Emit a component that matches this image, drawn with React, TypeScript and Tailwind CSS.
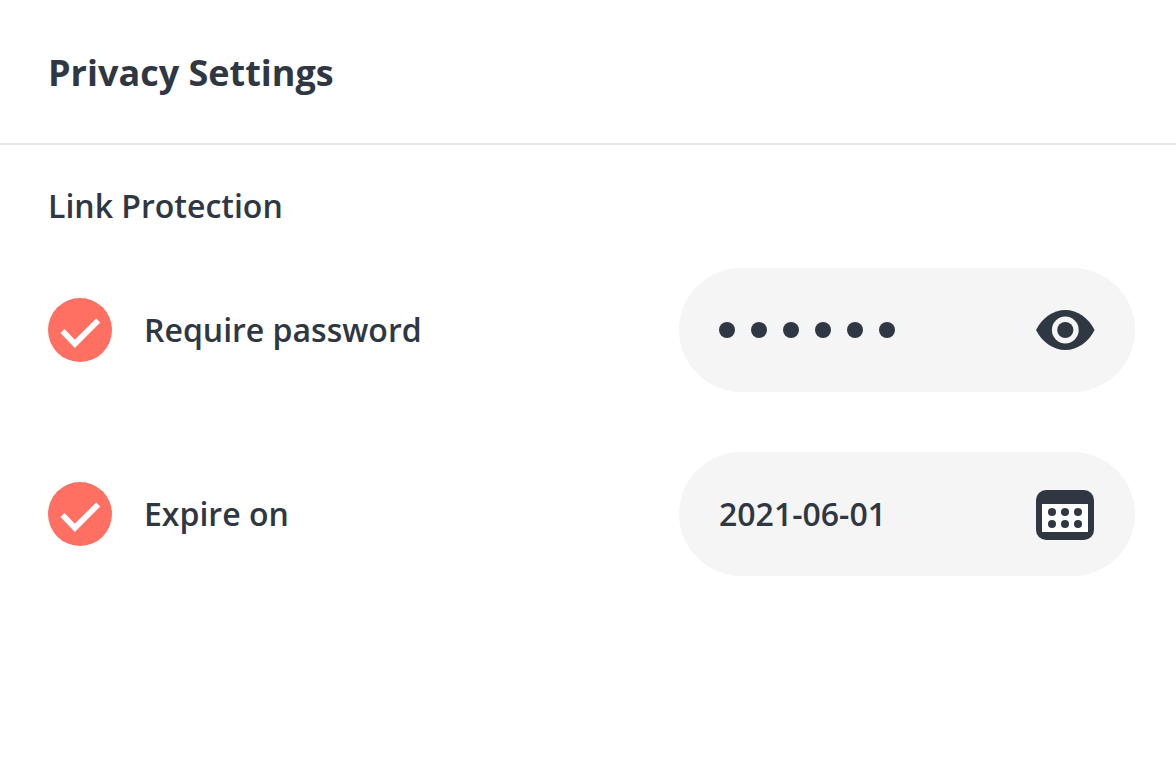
import { useId, useState } from 'react';
import type { ReactNode } from 'react';

function EyeIcon() {
    return (
        <svg viewBox="0 0 60 50" className="h-[50px] w-[60px]" fill="none" aria-hidden="true">
            <path d="M0 25C6 13 17 5 29.3 5S52.6 13 58.6 25C52.6 37 41.6 45 29.3 45S6 37 0 25Z" fill="#2f3742" />
            <circle cx="29.3" cy="25" r="13.4" fill="#f5f5f5" />
            <circle cx="29.3" cy="25" r="8.1" fill="#2f3742" />
        </svg>
    );
}

function CalendarIcon() {
    return (
        <svg viewBox="0 0 60 52" className="h-[52px] w-[60px]" fill="#2f3742" aria-hidden="true">
            <rect y="2" width="58" height="50" rx="10" />
            <rect x="6" y="16" width="46" height="28" fill="#fff" />
            {[24, 36].map((y) => [16, 29, 42].map((x) => <circle key={`${x}-${y}`} cx={x} cy={y} r="4" />))}
        </svg>
    );
}

function Checkbox({ id }: { id: string }) {
    return (
        <span className="grid size-16 shrink-0">
            <input
                id={id}
                type="checkbox"
                defaultChecked
                className="peer col-start-1 row-start-1 size-16 cursor-pointer appearance-none rounded-full bg-[#f5f5f5] checked:bg-[#ff7063]"
            />
            <svg
                viewBox="0 0 64 64"
                className="pointer-events-none invisible col-start-1 row-start-1 size-16 peer-checked:visible"
                aria-hidden="true"
            >
                <path d="M12.5 35L16.5 31L26.8 41.7L48.2 20.5L52.2 24.5L26.8 50Z" fill="#fff" />
            </svg>
        </span>
    );
}

function SettingRow({ label, children }: { label: string; children: ReactNode }) {
    const id = useId();

    return (
        <div className="flex items-center justify-between gap-8">
            <div className="flex items-center gap-8">
                <Checkbox id={id} />
                <label htmlFor={id} className="cursor-pointer whitespace-nowrap">
                    {label}
                </label>
            </div>
            <div className="flex h-31 w-114 items-center justify-between rounded-full bg-[#f5f5f5] px-10">
                {children}
            </div>
        </div>
    );
}

export default function App() {
    const [password, setPassword] = useState('secret');
    const [visible, setVisible] = useState(false);
    const [date, setDate] = useState('2021-06-01');

    return (
        <main className="min-h-screen bg-white font-['Open_Sans',sans-serif] text-[32px] leading-12 font-semibold text-[#2f3742]">
            <header className="border-b-2 border-[#e8e8e8] px-12 pt-[49px] pb-[46px]">
                <h1 className="text-4xl leading-12 font-bold">Privacy Settings</h1>
            </header>

            <section className="pt-[37px] pr-[41px] pb-12 pl-12">
                <h2>Link Protection</h2>

                <div className="mt-[38px] flex flex-col gap-15">
                    <SettingRow label="Require password">
                        <div className="grid min-w-0 flex-1 items-center">
                            {!visible && (
                                <div className="col-start-1 row-start-1 flex gap-4" aria-hidden="true">
                                    {Array.from(password).map((_, i) => (
                                        <span key={i} className="size-4 rounded-full bg-[#2f3742]" />
                                    ))}
                                </div>
                            )}
                            <input
                                type={visible ? 'text' : 'password'}
                                aria-label="Password"
                                value={password}
                                onChange={(e) => setPassword(e.target.value)}
                                className={`col-start-1 row-start-1 w-full bg-transparent outline-none ${visible ? '' : 'text-transparent'}`}
                            />
                        </div>
                        <button
                            type="button"
                            aria-label="Show password"
                            aria-pressed={visible}
                            onClick={() => setVisible(!visible)}
                            className="-mr-px cursor-pointer"
                        >
                            <EyeIcon />
                        </button>
                    </SettingRow>

                    <SettingRow label="Expire on">
                        <input
                            type="text"
                            aria-label="Expiry date"
                            value={date}
                            onChange={(e) => setDate(e.target.value)}
                            className="min-w-0 flex-1 bg-transparent outline-none"
                        />
                        <button type="button" aria-label="Open calendar" className="-mr-px cursor-pointer">
                            <CalendarIcon />
                        </button>
                    </SettingRow>
                </div>
            </section>
        </main>
    );
}
